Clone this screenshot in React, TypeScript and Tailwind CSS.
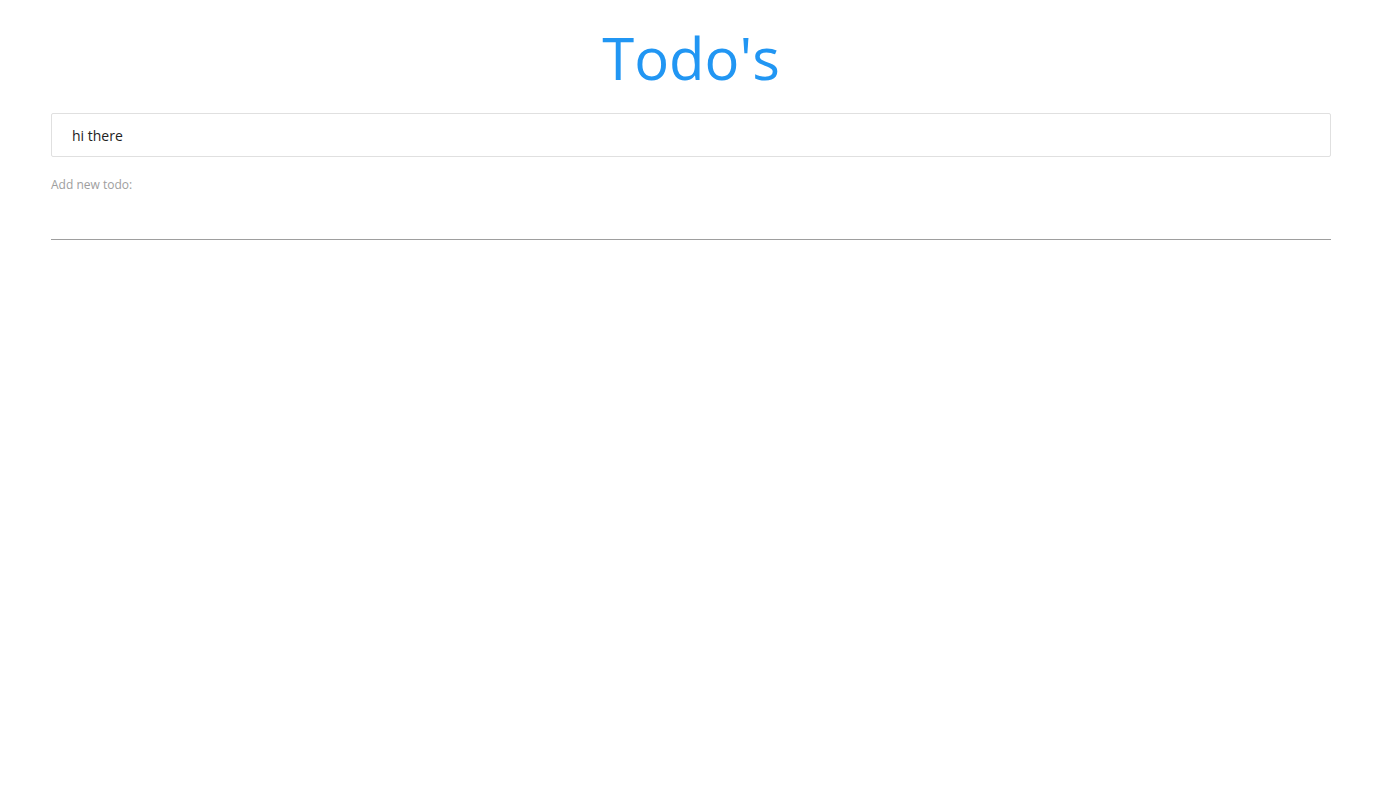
export default function App() {
  return (
    <div className="min-h-screen bg-white font-['Open_Sans',sans-serif]">
      <div className="w-[1280px] ml-[51px] pt-[16px]">
        <h1 className="text-center text-[58px] leading-[84px] text-[#2196f3] font-normal">
          Todo's
        </h1>

        {/* todo list */}
        <div className="mt-[13px] border border-[#e0e0e0] rounded-[2px] bg-white">
          <div className="h-[42px] flex items-center px-[20px] text-[14px] text-[#222]">
            hi there
          </div>
        </div>

        {/* new todo form */}
        <form className="mt-[20px]" onSubmit={(e) => e.preventDefault()}>
          <label className="block text-[12px] leading-[16px] text-[#9e9e9e]">Add new todo:</label>
          <input
            type="text"
            className="block w-full h-[47px] border-0 border-b border-[#9e9e9e] outline-none bg-transparent text-[14px]"
          />
        </form>
      </div>
    </div>
  );
}
